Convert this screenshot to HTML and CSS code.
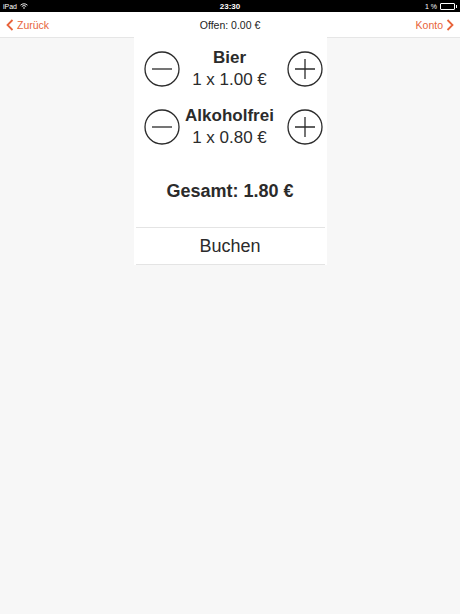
FILE: index.html
```html
<!DOCTYPE html>
<html lang="de">
<head>
    <meta charset="UTF-8">
    <meta name="viewport" content="width=device-width, initial-scale=1.0">
    <title>Warenkorb</title>
    <link rel="stylesheet" href="styles.css">
</head>
<body>
    <div class="statusbar">
        <div class="status-left">iPad
            <svg class="wifi" width="8" height="6" viewBox="0 0 8 6">
                <path d="M0.5 2.2 A5 5 0 0 1 7.5 2.2 M1.8 3.5 A3.2 3.2 0 0 1 6.2 3.5" fill="none" stroke="#fff" stroke-width="0.9"/>
                <circle cx="4" cy="5" r="0.8" fill="#fff"/>
            </svg>
        </div>
        <div class="status-time">23:30</div>
        <div class="status-right">1 %
            <span class="battery"></span><span class="battery-tip"></span>
        </div>
    </div>

    <header class="navbar">
        <a class="nav-link" href="#">
            <svg width="8" height="12" viewBox="0 0 8 12"><path d="M6.5 1 L1.5 6 L6.5 11" fill="none" stroke="#e8633a" stroke-width="1.8"/></svg>
            Zurück
        </a>
        <div class="nav-title">Offen: 0.00 €</div>
        <a class="nav-link" href="#">
            Konto
            <svg width="8" height="12" viewBox="0 0 8 12"><path d="M1.5 1 L6.5 6 L1.5 11" fill="none" stroke="#e8633a" stroke-width="1.8"/></svg>
        </a>
    </header>

    <main class="card">
        <div class="item">
            <button class="round-btn" aria-label="weniger">
                <svg width="36" height="36" viewBox="0 0 36 36"><circle cx="18" cy="18" r="17" fill="none" stroke="#2b2b2b" stroke-width="1.3"/><path d="M8 18 H28" stroke="#2b2b2b" stroke-width="1.3"/></svg>
            </button>
            <div class="item-text">
                <div class="item-name">Bier</div>
                <div class="item-price">1 x 1.00 €</div>
            </div>
            <button class="round-btn" aria-label="mehr">
                <svg width="36" height="36" viewBox="0 0 36 36"><circle cx="18" cy="18" r="17" fill="none" stroke="#2b2b2b" stroke-width="1.3"/><path d="M8 18 H28 M18 8 V28" stroke="#2b2b2b" stroke-width="1.3"/></svg>
            </button>
        </div>
        <div class="item">
            <button class="round-btn" aria-label="weniger">
                <svg width="36" height="36" viewBox="0 0 36 36"><circle cx="18" cy="18" r="17" fill="none" stroke="#2b2b2b" stroke-width="1.3"/><path d="M8 18 H28" stroke="#2b2b2b" stroke-width="1.3"/></svg>
            </button>
            <div class="item-text">
                <div class="item-name">Alkoholfrei</div>
                <div class="item-price">1 x 0.80 €</div>
            </div>
            <button class="round-btn" aria-label="mehr">
                <svg width="36" height="36" viewBox="0 0 36 36"><circle cx="18" cy="18" r="17" fill="none" stroke="#2b2b2b" stroke-width="1.3"/><path d="M8 18 H28 M18 8 V28" stroke="#2b2b2b" stroke-width="1.3"/></svg>
            </button>
        </div>

        <div class="total">Gesamt: 1.80 €</div>

        <button class="book-btn">Buchen</button>
    </main>
</body>
</html>
```

FILE: styles.css
```css
body {
    font-family: "Liberation Sans", Arial, sans-serif;
    margin: 0;
    padding: 0;
    background-color: #f7f7f7;
    color: #2b2b2b;
}
.statusbar {
    height: 12px;
    background-color: #000;
    color: #fff;
    font-size: 7px;
    display: flex;
    justify-content: space-between;
    align-items: center;
    padding: 0 3px;
}
.status-left, .status-right {
    width: 60px;
    display: flex;
    align-items: center;
    gap: 3px;
}
.status-right {
    justify-content: flex-end;
    gap: 1px;
}
.status-time {
    font-weight: bold;
    font-size: 8px;
}
.battery {
    width: 13px;
    height: 5px;
    border: 1px solid #fff;
    border-radius: 1px;
    margin-left: 2px;
}
.battery-tip {
    width: 1px;
    height: 3px;
    background-color: #fff;
}
.navbar {
    height: 25px;
    background-color: #fff;
    border-bottom: 1px solid #e6e6e6;
    display: flex;
    justify-content: space-between;
    align-items: center;
    padding: 0 6px;
}
.nav-link {
    color: #e8633a;
    text-decoration: none;
    font-size: 10.5px;
    display: flex;
    align-items: center;
    gap: 3px;
    width: 60px;
}
.nav-link:last-child {
    justify-content: flex-end;
}
.nav-title {
    font-size: 10.5px;
    color: #222;
}
.card {
    width: 193px;
    margin: -1px auto 0;
    background-color: #fff;
    padding-top: 10px;
    display: flex;
    flex-direction: column;
}
.item {
    display: grid;
    grid-template-columns: 36px 1fr 36px;
    align-items: center;
    padding: 0 4px 0 10px;
    margin-bottom: 15px;
}
.round-btn {
    border: none;
    background: none;
    padding: 0;
    width: 36px;
    height: 36px;
    display: block;
}
.item-text {
    text-align: center;
    line-height: 21.5px;
    padding-right: 7px;
}
.item-name {
    font-weight: bold;
    font-size: 17px;
}
.item-price {
    font-size: 17px;
}
.total {
    text-align: center;
    font-weight: bold;
    font-size: 18px;
    line-height: 21px;
    margin-top: 18px;
    margin-bottom: 25px;
}
.book-btn {
    margin: 0 2px;
    height: 38px;
    padding-top: 1px;
    border: none;
    border-top: 1px solid #e4e4e4;
    border-bottom: 1px solid #e4e4e4;
    background: #fff;
    font-family: inherit;
    font-size: 18px;
    color: #2b2b2b;
}
```
